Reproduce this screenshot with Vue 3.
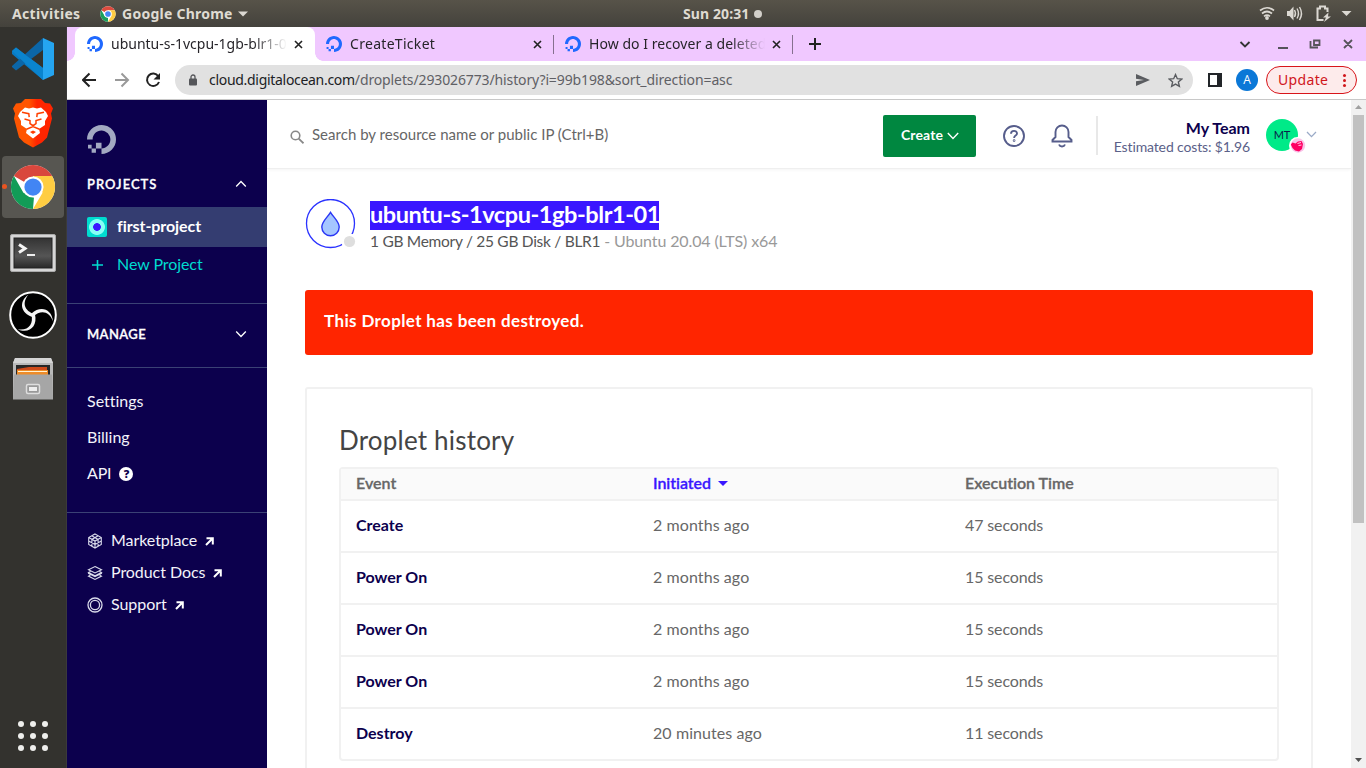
<script setup>
const logo = 'M12.04 0C5.408-.02.005 5.37.005 11.992h4.638c0-4.923 4.882-8.731 10.064-6.855a6.95 6.95 0 014.147 4.148c1.889 5.177-1.924 10.055-6.84 10.064v-4.61H7.391v4.623h4.61V24c7.86 0 13.967-7.588 11.397-15.83-1.115-3.59-3.985-6.446-7.575-7.575A12.8 12.8 0 0012.039 0zM7.39 19.362H3.828v3.564H7.39zm-3.563 0v-2.978H.85v2.978z'
const tabs = [
  { title: 'ubuntu-s-1vcpu-1gb-blr1-0', cls: 'active' },
  { title: 'CreateTicket', cls: 'second' },
  { title: 'How do I recover a deleted', cls: 'third' },
]
const events = [
  ['Create', '2 months ago', '47 seconds'],
  ['Power On', '2 months ago', '15 seconds'],
  ['Power On', '2 months ago', '15 seconds'],
  ['Power On', '2 months ago', '15 seconds'],
  ['Destroy', '20 minutes ago', '11 seconds'],
]
const links = [
  { name: 'Marketplace', icon: 'cube' },
  { name: 'Product Docs', icon: 'layers' },
  { name: 'Support', icon: 'ring' },
]
const dots = [0, 1, 2, 3, 4, 5, 6, 7, 8]
</script>

<template>
  <div class="screen">
    <header class="topbar">
      <span class="activities">Activities</span>
      <svg class="mini-chrome" width="16" height="16" viewBox="0 0 48 48">
        <circle cx="24" cy="24" r="23" fill="#fff" />
        <path d="M24 24 4.1 12.5A23 23 0 0 1 43.9 12.5H24z" fill="#dd4b3e" />
        <path d="M24 12.5h19.9A23 23 0 0 1 24 47l10-17z" fill="#ffcd42" />
        <path d="M4.1 12.5 14 30l10 5.500L24 47A23 23 0 0 1 4.100 12.500z" fill="#1a9f5c" />
        <circle cx="24" cy="24" r="11.500" fill="#fff" /><circle cx="24" cy="24" r="8.500" fill="#4587f4" />
      </svg>
      <span class="appname">Google Chrome</span>
      <svg class="app-arrow" width="10" height="6" viewBox="0 0 10 6"><path d="M0 .5h10L5 5.500z" fill="#dbd8d2" /></svg>
      <div class="clock"><span>Sun 20:31</span><i></i></div>
      <svg class="tray" width="110" height="27" viewBox="0 0 110 27">
        <g fill="none" stroke="#dbd8d2" stroke-width="1.700">
          <path d="M10 10.500q7-5.500 14 0M12 13.500q5-4 10 0M14 16.400q3-2.400 6 0" />
          <path d="M44.500 10q2 3.500 0 7M47 8.500q3 5 0 10M49.500 7q4 6.500 0 13" stroke-width="1.400" />
          <path d="M68.500 20h-1V8.500h2.500V6.500h5v2h2.500V12M67.500 20h6" stroke-width="2" />
        </g>
        <circle cx="17" cy="18" r="1.900" fill="#dbd8d2" />
        <path d="M37 11h2.500l4-4.500v14l-4-4.500H37zM78.500 12.500l-5.500 5h3l-2 4.500 7-5.500h-3z" fill="#dbd8d2" />
        <path d="M91.500 11h10l-5 5z" fill="#dbd8d2" />
      </svg>
    </header>

    <div class="desktop">
      <nav class="dock">
        <div class="slot">
          <svg width="44" height="44" viewBox="0 0 44 44">
            <path d="M1 14 5 10.500 32 31v12L1 17z" fill="#0879c3" />
            <path d="M1 29 32 1v12L5 33.500 1 30z" fill="#0b66a8" />
            <path d="M1 14 5 10.500 12 16l20 15v12z" fill="#0a84cf" />
            <path d="M32 1 43 6v32l-11 5z" fill="#25a5f1" />
          </svg>
        </div>
        <div class="slot">
          <svg width="42" height="50" viewBox="0 0 42 50">
            <defs><linearGradient id="brave"><stop offset=".4" stop-color="#ff5500" /><stop offset=".6" stop-color="#ff2500" /></linearGradient></defs>
            <path d="M13 1h16l4 4 5 .5 3 5-2 5 1 5-5 19-5 5-9 5-9-5-5-5L2 20.500l1-5-2-5 3-5L9 5z" fill="url(#brave)" />
            <path d="M8 14l5-4.500 4 1 4-1 4 1 4-1 5 4.500 2 4-3 5v4l-6 4 1 4-7 5.500-7-5.500 1-4-6-4v-4l-3-5z" fill="#fff" />
            <path d="M10 14.300l6.800 1.400.4 3.500M32 14.300l-6.800 1.400-.4 3.500M12.500 21l5.500 1.500v3l3 2.200 3-2.200v-3l5.500-1.500M14.500 31.200l6.500-2.700 6.500 2.700" fill="none" stroke="#ff4000" stroke-width="1.500" />
            <path d="M18 34l3-1.500 3 1.500-3 2z" fill="#ff3c00" />
          </svg>
        </div>
        <div class="slot current">
          <i class="running"></i>
          <svg width="46" height="46" viewBox="0 0 48 48">
            <circle cx="24" cy="24" r="23" fill="#fff" />
            <path d="M24 24 4.1 12.500A23 23 0 0 1 43.9 12.500H24z" fill="#d9473d" />
            <path d="M24 12.500h19.900A23 23 0 0 1 24 47l10-17z" fill="#ffcd42" />
            <path d="M4.100 12.500 14 30l11 5-1 12A23 23 0 0 1 4.100 12.500z" fill="#129c57" />
            <circle cx="24" cy="24" r="11" fill="#fff" /><circle cx="24" cy="24" r="9" fill="#4285f4" />
          </svg>
        </div>
        <div class="slot terminal">
          <svg width="46" height="39" viewBox="0 0 46 39">
            <defs><linearGradient id="term" x2="0" y2="1"><stop stop-color="#333" /><stop offset=".6" stop-color="#555" /><stop offset="1" stop-color="#292929" /></linearGradient></defs>
            <rect x=".5" y=".5" width="45" height="37" rx="1.500" fill="#d6d6d6" stroke="#aaa" />
            <rect x="4" y="4" width="38" height="30" fill="url(#term)" stroke="#222" />
            <path d="M9 10.500l6 4-6 4" fill="none" stroke="#f4f4f4" stroke-width="3" /><path d="M17 21h8" stroke="#eee" stroke-width="2" />
          </svg>
        </div>
        <div class="slot">
          <svg width="48" height="48" viewBox="0 0 48 48">
            <circle cx="24" cy="24" r="22.800" fill="#000" stroke="#fff" stroke-width="2" />
            <g fill="#f5f5f5">
              <path v-for="a in [0, 120, 240]" :key="a" :transform="`rotate(${a} 24 24)`" d="M23.500 26C12 22.500 9 11 19.500 3.500 12.500 12 15.500 20 25.500 23z" />
            </g>
          </svg>
        </div>
        <div class="slot">
          <svg width="44" height="46" viewBox="0 0 44 46">
            <path d="M4 2h36l2 5v36H2V7z" fill="#b9b9b9" /><path d="M4 2h36l2 5H2z" fill="#d5d5d5" />
            <path d="M5 9h34v12H5z" fill="#282828" /><path d="M6 13l12-2h18v9H6z" fill="#cf4b1a" /><path d="M6 14h31v6H6z" fill="#ee8c29" /><path d="M7 15.500h29" stroke="#fff4d6" />
            <path d="M3 18.500h38l1 25H2z" fill="#a6a6a6" /><rect x="15.500" y="28.500" width="13" height="9" rx="1.500" fill="#999" stroke="#dedede" stroke-width="1.500" /><path d="M18 31h8v4h-8z" fill="#eee" />
          </svg>
        </div>
        <div class="apps"><i v-for="d in dots" :key="d"></i></div>
      </nav>

      <section class="window">
        <div class="tabstrip">
          <div v-for="t in tabs" :key="t.title" class="tab" :class="t.cls">
            <svg class="fav" width="16" height="16" viewBox="0 0 24 24"><path :d="logo" fill="#1f69ff" /></svg>
            <span class="tab-title">{{ t.title }}</span>
            <svg class="tab-x" width="9" height="9" viewBox="0 0 9 9"><path d="M1 1l7 7M8 1 1 8" stroke="#222" stroke-width="1.600" /></svg>
          </div>
          <svg class="plus" width="12" height="12" viewBox="0 0 12 12"><path d="M6 0v12M0 6h12" stroke="#222" stroke-width="2" /></svg>
          <svg class="wincontrols" width="114" height="34" viewBox="0 0 114 34">
            <g fill="none" stroke="#55535a" stroke-width="1.800">
              <path d="M1.500 15l4.500 4.500L10.500 15" stroke="#333" />
              <path d="M39 21h10M79 20.500h-7.500V14M75 13.500h5.500V18H75zM105 13l8 8M113 13l-8 8" />
            </g>
          </svg>
        </div>

        <div class="toolbar">
          <svg class="navicons" width="80" height="38" viewBox="0 0 80 38">
            <path d="M14 19H1.500M7.500 12.500 1 19l6.500 6.500" fill="none" stroke="#222" stroke-width="2" />
            <path d="M33 19h12.500M39.500 12.500 46 19l-6.500 6.500" fill="none" stroke="#999" stroke-width="2" />
            <path d="M76.300 15.200A6.200 6.200 0 1 0 77 21" fill="none" stroke="#222" stroke-width="2" /><path d="M78 12v6.500h-6.500z" fill="#222" />
          </svg>
          <div class="omnibox">
            <svg width="8" height="12" viewBox="0 0 8 12"><path d="M2 5V3a2 2 0 0 1 4 0v2" fill="none" stroke="#55565a" stroke-width="1.300" /><rect y="4.500" width="8" height="7" rx="1" fill="#55565a" /></svg>
            <span class="url"><b>cloud.digitalocean.com</b>/droplets/293026773/history?i=99b198&amp;sort_direction=asc</span>
            <svg class="send" width="14" height="12" viewBox="0 0 14 12"><path d="M0 0l14 6-14 6V7.200L8 6 0 4.800z" fill="#5a5c60" /></svg>
            <svg class="star" width="15" height="15" viewBox="0 0 24 24"><path d="M12 2.500l2.900 6.600 7.100.6-5.400 4.700 1.600 7L12 17.700l-6.200 3.700 1.600-7L2 9.700l7.100-.6z" fill="none" stroke="#5a5c60" stroke-width="2.200" /></svg>
          </div>
          <svg class="side" width="14" height="14" viewBox="0 0 14 14"><path d="M1 1h12v12H1z" fill="#fff" stroke="#222529" stroke-width="2" /><path d="M9 1h4v12H9z" fill="#222529" /></svg>
          <span class="profile">A</span>
          <div class="update"><span>Update</span><i></i></div>
        </div>

        <div class="page">
          <aside class="sidebar">
            <svg class="brand" width="29" height="29" viewBox="0 0 24 24"><path :d="logo" fill="#a3a9c2" /></svg>
            <div class="group projects"><span>PROJECTS</span><svg width="12" height="8" viewBox="0 0 12 8"><path d="M1.200 6.500 6 1.500l4.800 5" fill="none" stroke="#fff" stroke-width="1.300" /></svg></div>
            <div class="project"><i class="swatch"></i><span>first-project</span></div>
            <div class="newproject"><svg width="20" height="12" viewBox="0 0 20 12"><path d="M10.500 1v10M5 6h11" stroke="#00dcd0" stroke-width="1.600" /></svg><span>New Project</span></div>
            <div class="group manage"><span>MANAGE</span><svg width="12" height="8" viewBox="0 0 12 8"><path d="M1.200 1.500 6 6.500l4.800-5" fill="none" stroke="#fff" stroke-width="1.300" /></svg></div>
            <div class="account">
              <span class="settings">Settings</span><span class="billing">Billing</span>
              <span class="api">API<i class="help">?</i></span>
            </div>
            <div class="external">
              <div v-for="l in links" :key="l.name" class="ext">
                <svg width="16" height="16" viewBox="0 0 16 16" fill="none" stroke="#d9daea" stroke-width="1.100">
                  <path v-if="l.icon === 'cube'" d="M8 1l6.300 3.500v7L8 15l-6.300-3.500v-7zM1.700 4.500 8 8l6.300-3.500M8 8v7M4.800 2.800l6.300 3.600M11.200 2.800 4.900 6.400v6.800M1.700 8 8 11.600M11.100 6.400v6.800M8 11.600 14.300 8" />
                  <path v-else-if="l.icon === 'layers'" d="M8 1.500l6.500 3.200L8 8 1.500 4.700zM1.500 7.500v1L8 11.700l6.500-3.200v-1M3.500 6.400l-2 1.100L8 10.700l6.500-3.200-2-1.100M3.500 9.900l-2 1.200L8 14.400l6.500-3.300-2-1.200" />
                  <g v-else><circle cx="8" cy="8" r="7" stroke-width="1.300" /><circle cx="8" cy="8" r="4.600" stroke-width="1.300" /></g>
                </svg>
                <span>{{ l.name }}</span>
                <svg class="out" width="9" height="9" viewBox="0 0 9 9"><path d="M1 8l6-6M1.500 1.200h6.300v6.300" fill="none" stroke="#fff" stroke-width="2" /></svg>
              </div>
            </div>
          </aside>

          <main class="main">
            <div class="header">
              <svg class="lens" width="14" height="14" viewBox="0 0 14 14" fill="none" stroke="#888"><circle cx="5.500" cy="5.500" r="4.300" stroke-width="1.600" /><path d="M8.700 8.700l4.800 4.600" stroke-width="1.800" /></svg>
              <span class="search">Search by resource name or public IP (Ctrl+B)</span>
              <div class="create"><span>Create</span><svg width="12" height="8" viewBox="0 0 12 8"><path d="M.8 1 6 6.500 11.200 1" fill="none" stroke="#fff" stroke-width="1.400" /></svg></div>
              <svg class="question" width="22" height="22" viewBox="0 0 22 22" fill="none" stroke="#565d8b" stroke-width="1.900"><circle cx="11" cy="11" r="10" /><path d="M8 8.800c0-3.800 6-3.800 6-.3 0 2.200-2.900 2-2.900 4.400" /><circle cx="11.100" cy="15.600" r=".4" /></svg>
              <svg class="bell" width="22" height="24" viewBox="0 0 22 24" fill="none" stroke="#565d8b" stroke-width="1.900"><path d="M4.500 13V8a6.500 6.500 0 0 1 13 0v5l3 3v1.500h-19V16zM8 20.500c1 2.700 5 2.700 6 0" /></svg>
              <i class="divider"></i>
              <div class="team"><span class="team-name">My Team</span><span class="costs">Estimated costs: $1.96</span></div>
              <div class="avatar"><span>MT</span>
                <svg class="badge" width="17" height="17" viewBox="0 0 17 17"><circle cx="8.500" cy="8.500" r="8.500" fill="#fff" /><circle cx="9" cy="8.500" r="7.200" fill="#f9c4e8" /><path d="M1.800 7.500 3.500 5.500l3 1L9 4.500l3.500-.5 1.500 3-1 5-3 2.500-4-1L3.500 11z" fill="#ff0063" /><path d="M8.500 6.500l3.500-1M9.500 8.500l3-.5" stroke="#ffd0ea" stroke-width="1" /></svg>
              </div>
              <svg class="caret" width="11" height="7" viewBox="0 0 11 7"><path d="M1 1l4.500 4.600L10 1" fill="none" stroke="#9aaac7" stroke-width="1.300" /></svg>
            </div>

            <div class="droplet">
              <svg width="52" height="52" viewBox="0 0 52 52">
                <circle cx="25.500" cy="24.500" r="24" fill="#fff" stroke="#2a32ff" stroke-width="1.300" />
                <path d="M25.500 13.300c3 5 8.700 9.300 8.700 14.700a8.700 8.700 0 0 1-17.400 0c0-5.400 5.700-9.700 8.700-14.700z" fill="#a5c6ff" stroke="#2a36f5" stroke-width="1.400" />
                <circle cx="44.500" cy="42.500" r="8" fill="#fff" /><circle cx="44.500" cy="42.500" r="5.600" fill="#dedede" />
              </svg>
              <div class="names">
                <span class="title">ubuntu-s-1vcpu-1gb-blr1-01</span>
                <div class="spec"><span class="size">1 GB Memory / 25 GB Disk / BLR1</span><span class="image">- Ubuntu 20.04 (LTS) x64</span></div>
              </div>
            </div>

            <div class="alert"><span>This Droplet has been destroyed.</span></div>

            <div class="card">
              <h2><span>Droplet history</span></h2>
              <div class="table">
                <div class="row head"><span>Event</span><span class="sorted"><em>Initiated</em><svg width="10" height="5" viewBox="0 0 10 5"><path d="M0 0h10L5 5z" fill="#3a17ff" /></svg></span><span>Execution Time</span></div>
                <div v-for="(e, i) in events" :key="i" class="row"><span class="name">{{ e[0] }}</span><span class="ago">{{ e[1] }}</span><span class="secs">{{ e[2] }}</span></div>
              </div>
            </div>
          </main>

          <div class="scrollbar">
            <svg width="15" height="15" viewBox="0 0 15 15"><path d="M4 9h7L7.500 5z" fill="#a0a0a0" /></svg>
            <i></i>
            <svg class="down" width="15" height="15" viewBox="0 0 15 15"><path d="M4 5h7L7.500 9z" fill="#505050" /></svg>
          </div>
        </div>
      </section>
    </div>
  </div>
</template>

<style>
html, body { margin: 0; overflow: hidden; }
</style>

<style scoped>
* { box-sizing: border-box; }
svg { display: block; flex: none; }
span, em, i { white-space: nowrap; }
.screen { width: 1366px; height: 768px; overflow: hidden; font-family: Lato, "Open Sans", sans-serif; font-variant-ligatures: none; display: flex; flex-direction: column; }
.topbar { height: 27px; flex: none; background: linear-gradient(#575349, #44423c); display: flex; align-items: center; position: relative; font: 700 14px/27px "Noto Sans", sans-serif; color: #dfdbd2; padding-left: 12px; }
.activities { width: 88px; letter-spacing: .35px; }
.appname { margin-left: 6px; width: 116px; letter-spacing: .25px; }
.clock { position: absolute; left: 683px; top: 0; display: flex; align-items: center; gap: 5px; letter-spacing: .1px; }
.clock i { width: 8px; height: 8px; border-radius: 50%; background: #d2cfc9; }
.tray { position: absolute; right: 6px; top: 0; }
.desktop { flex: 1; display: flex; min-height: 0; }
.dock { width: 67px; flex: none; background: #33322e; border-right: 1px solid #3b3a3a; display: flex; flex-direction: column; gap: 2px; padding: 1px 2px 0; }
.slot { width: 62px; height: 62px; border-radius: 4px; display: flex; align-items: center; justify-content: center; position: relative; }
.terminal { padding-top: 4px; }
.current { background: #575651; }
.running { position: absolute; left: 0; top: 28px; width: 5px; height: 5px; border-radius: 50%; background: #e95420; }
.apps { margin: auto 0 17px 16px; display: grid; grid-template-columns: repeat(3, 6px); gap: 6px; }
.apps i { width: 6px; height: 6px; border-radius: 50%; background: #eeeeec; }
.window { flex: 1; display: flex; flex-direction: column; min-width: 0; }
.tabstrip { height: 34px; flex: none; background: #f0c8ff; display: flex; align-items: center; padding-left: 8px; font: 14px/34px "Noto Sans", sans-serif; color: #27252a; }
.tab { height: 34px; display: flex; align-items: center; position: relative; width: 239px; padding-left: 11px; }
.tab.active { background: #fff; border-radius: 8px 8px 0 0; width: 240px; padding-left: 12px; }
.tab.active::before, .tab.active::after { content: ""; position: absolute; bottom: 0; width: 8px; height: 8px; }
.tab.active::before { left: -8px; background: radial-gradient(circle at 0 0, #f0c8ff 7.5px, #fff 8px); }
.tab.active::after { right: -8px; background: radial-gradient(circle at 100% 0, #f0c8ff 7.5px, #fff 8px); }
.tab.second::after, .tab.third::after { content: ""; position: absolute; right: 0; top: 8px; width: 1px; height: 19px; background: #86708f; }
.tab-title { margin-left: 8px; width: 176px; -webkit-mask-image: linear-gradient(90deg, #000 142px, transparent 176px); mask-image: linear-gradient(90deg, #000 142px, transparent 176px); }
.second .tab-title { letter-spacing: .3px; }
.third .tab-title { letter-spacing: .05px; }
.tab-x { margin-left: 7px; }
.plus { margin-left: 16px; }
.wincontrols { margin-left: auto; margin-right: 13px; }
.toolbar { height: 39px; flex: none; background: #fff; border-bottom: 1px solid #c8c8c8; display: flex; align-items: center; padding-left: 15px; }
.omnibox { margin-left: 13px; width: 1018px; height: 30px; border-radius: 15px; background: #e1e1e1; display: flex; align-items: center; padding-left: 14px; font: 14px/30px "Noto Sans", sans-serif; color: #5f6065; }
.url { margin-left: 12px; width: 927px; letter-spacing: -.12px; }
.url b { font-weight: 400; color: #202124; letter-spacing: -.3px; }
.star { margin-left: 18px; }
.side { margin-left: 15px; }
.profile { width: 22px; height: 22px; margin-left: 14px; border-radius: 50%; background: #0b78d7; color: #fff; font: 12px/22px "Open Sans", sans-serif; text-align: center; }
.update { margin-left: 8px; width: 91px; height: 28px; border: 1px solid #d8141a; border-radius: 14px; background: #fdebeb; color: #d0161b; display: flex; align-items: center; padding-left: 11px; font: 14px/26px "Noto Sans", sans-serif; }
.update span { width: 65px; letter-spacing: .35px; }
.update i { width: 3px; height: 3px; background: #d0161b; border-radius: 50%; box-shadow: 0 -5px #d0161b, 0 5px #d0161b; }
.page { flex: 1; min-height: 0; display: flex; background: #fff; }
.sidebar { width: 200px; flex: none; background: #0c004d; color: #f3f3fa; font-size: 16px; }
.brand { margin: 25px 0 0 20px; }
.group { display: flex; align-items: center; justify-content: space-between; padding: 0 20px; font-size: 13px; font-weight: 600; letter-spacing: 1px; color: #fff; -webkit-text-stroke: .3px #fff; }
.projects { height: 53px; padding-top: 7px; }
.project { height: 40px; background: #343d71; display: flex; align-items: center; gap: 10px; padding-left: 20px; font-weight: 700; letter-spacing: -.07px; color: #fff; }
.project span, .newproject span, .ext span, .search { padding-bottom: 3px; }
.swatch { width: 20px; height: 20px; border-radius: 2px; background: radial-gradient(circle, #3a17ff 3.5px, #87fff5 4.2px, #87fff5 7.5px, #00dcd0 8.3px); }
.newproject { height: 36px; display: flex; align-items: center; gap: 10px; padding-left: 20px; letter-spacing: -.07px; color: #00dcd0; }
.manage { margin-top: 20px; height: 65px; padding-bottom: 3px; border: solid #3b4175; border-width: 1px 0; letter-spacing: .4px; }
.account { height: 144px; padding: 15px 0 0 20px; display: flex; flex-direction: column; line-height: 36px; }
.api { display: flex; align-items: center; letter-spacing: -.2px; }
.help { width: 14px; height: 14px; margin: 2px 0 0 8px; background: #fff; border-radius: 50%; color: #0c004d; font: 900 11px/14px "Open Sans", sans-serif; text-align: center; }
.external { border-top: 1px solid #3b4175; padding: 12px 0 0 20px; }
.ext { height: 32px; display: flex; align-items: center; gap: 8px; letter-spacing: -.06px; }
.main { width: 1084px; flex: none; color: #676767; font-size: 16px; overflow: hidden; }
.header { height: 69px; border-bottom: 1px solid #efefef; box-shadow: 0 1px 3px #f4f4f4; display: flex; align-items: center; padding-left: 23px; padding-top: 3px; }
.lens { margin-top: 2px; }
.search { margin-left: 8px; width: 571px; font-size: 15px; color: #666; letter-spacing: .02px; }
.create { width: 93px; height: 42px; border-radius: 2px; background: #008740; color: #fff; font-size: 14px; font-weight: 700; display: flex; align-items: center; padding-left: 18px; gap: 3px; }
.create span { width: 43px; padding-bottom: 2px; letter-spacing: .1px; }
.question { margin-left: 27px; }
.bell { margin-left: 26px; }
.divider { margin-left: 23px; width: 2px; height: 39px; background: #e8e8e8; }
.team { width: 152px; padding-top: 2px; display: flex; flex-direction: column; align-items: flex-end; line-height: 19px; }
.team-name { font-weight: 700; color: #0c004d; }
.costs { font-size: 14px; letter-spacing: -.13px; color: #5b6189; }
.avatar { margin: -2px 0 0 16px; width: 32px; height: 32px; border-radius: 50%; background: #00ea88; color: #08214a; font-size: 11px; line-height: 32px; text-align: center; position: relative; }
.badge { position: absolute; left: 23px; top: 18px; }
.caret { margin: -2px 0 0 8px; }
.droplet { margin: 30px 0 0 38px; height: 52px; display: flex; }
.names { margin: 2px 0 0 13px; }
.title { display: block; width: 289px; height: 29px; background: #3a17ff; color: #fff; font-size: 23.5px; font-weight: 700; line-height: 26px; letter-spacing: -.42px; }
.spec { display: flex; gap: 4px; line-height: 22px; color: #555; }
.size { font-size: 15.5px; letter-spacing: -.29px; }
.image { color: #999; letter-spacing: -.12px; }
.alert { margin: 39px 0 0 38px; width: 1008px; height: 65px; border-radius: 3px; background: #ff2500; color: #fff; font-weight: 700; font-size: 17px; letter-spacing: .37px; line-height: 61px; padding-left: 19px; }
.card { margin: 32px 0 0 38px; width: 1008px; height: 420px; border: 2px solid #f1f1f1; border-radius: 3px; padding: 34px 32px 0; }
h2 { margin: 0; font-size: 26px; font-weight: 400; color: #444; line-height: 34px; height: 44px; letter-spacing: .2px; }
.table { width: 940px; border: 2px solid #f1f1f1; border-radius: 4px; }
.row { height: 52px; display: grid; grid-template-columns: 297px 312px 1fr; align-items: center; padding-left: 15px; border-bottom: 2px solid #f1f1f1; }
.row > span { padding-bottom: 3px; }
.row:last-child { border: 0; height: 50px; }
.head { height: 32px; background: #fafafa; font-weight: 600; -webkit-text-stroke: .3px currentColor; }
.ago { letter-spacing: .08px; }
.secs { letter-spacing: -.13px; }
.name { color: #0c004d; font-weight: 700; }
.sorted { color: #3a17ff; display: flex; align-items: center; gap: 7px; letter-spacing: -.05px; }
.sorted svg { margin-top: 2px; }
em { font-style: normal; }
.scrollbar { width: 15px; background: #f1f1f1; position: relative; display: flex; flex-direction: column; align-items: center; }
.scrollbar i { width: 11px; height: 408px; background: #c1c1c1; }
.down { margin-top: auto; }
</style>
